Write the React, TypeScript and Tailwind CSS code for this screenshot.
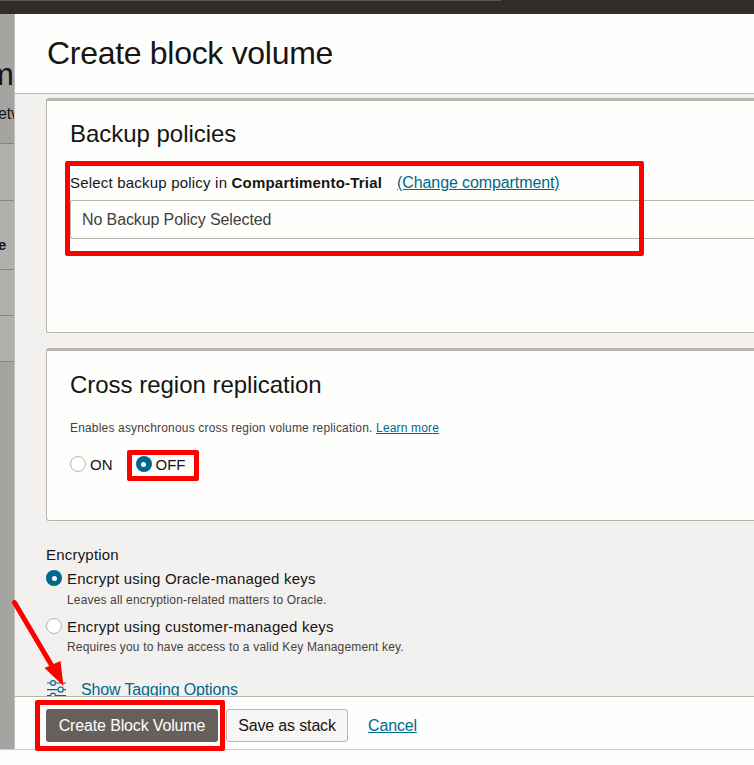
import type { ReactNode } from "react";

function Radio({ checked = false }: { checked?: boolean }) {
  return checked ? (
    <span className="flex h-4 w-4 shrink-0 items-center justify-center rounded-full bg-[#00688c]">
      <span className="h-[5px] w-[5px] rounded-full bg-white" />
    </span>
  ) : (
    <span className="h-4 w-4 shrink-0 rounded-full border border-[#bbb5b0] bg-[#fefefd]" />
  );
}

function Card({ title, className, children }: { title: ReactNode; className: string; children: ReactNode }) {
  return (
    <section
      className={`shrink-0 rounded-l-[3px] border-y border-l border-t-[3px] border-[#bbb4ad] bg-[#fefefd] pl-[23px] ${className}`}
    >
      {title}
      {children}
    </section>
  );
}

function Backdrop() {
  return (
    <aside className="flex w-[14px] shrink-0 flex-col overflow-hidden whitespace-nowrap bg-[#a5a4a2]">
      <div className="h-[129px] shrink-0">
        <div className="flex h-[78px] justify-end pt-[42px] text-[32px] leading-9">m</div>
        <div className="-ml-[2px] pt-[12px] text-[16px] leading-5 tracking-[-0.1px]">etw</div>
      </div>
      <div className="h-[57px] shrink-0 border-t border-[#858482] bg-[#b1b0ae]" />
      <div className="flex h-[69px] shrink-0 items-center border-t border-[#858482] bg-[#b1b0ae] pt-5 text-[15px] font-bold">
        <span className="-ml-[2px]">e</span>
      </div>
      <div className="h-[46px] shrink-0 border-t border-[#858482] bg-[#b1b0ae]" />
      <div className="h-[46px] shrink-0 border-t border-[#858482] bg-[#b1b0ae]" />
      <div className="flex-1 border-t border-[#858482]" />
    </aside>
  );
}

export default function App() {
  return (
    <div className="relative flex h-[765px] w-[754px] flex-col overflow-hidden bg-[#fcfcfc] font-['Liberation_Sans',Arial,sans-serif] text-[#161513]">
      <header className="h-[14px] shrink-0 bg-[#312d2a]">
        <div className="h-px w-[501px] bg-[#5b574e]" />
      </header>

      <div className="flex h-[735px] shrink-0">
        <Backdrop />
        <main className="flex min-w-0 flex-1 flex-col overflow-hidden whitespace-nowrap border-l border-[#c4bfb9] bg-[#fefefd]">
          <h1 className="h-20 shrink-0 border-b border-[#bbb5b0] pt-[21px] pl-8 text-[32px] leading-9 tracking-[-0.3px]">
            Create block volume
          </h1>

          <div className="flex h-[602px] shrink-0 flex-col overflow-hidden bg-[#f3f1f0] pt-1 pl-[31px]">
            <Card
              className="h-[235px]"
              title={<h2 className="h-[68px] pt-[19px] text-2xl leading-7 tracking-[-0.03px]">Backup policies</h2>}
            >
              <div className="flex h-[31px] items-center pb-[3px] text-[15px]">
                <span className="tracking-[0.2px]">
                  Select backup policy in <b>Compartimento-Trial</b>
                </span>
                <a className="ml-[15px] text-[16px] tracking-[-0.1px] text-[#00688c] underline">
                  (Change compartment)
                </a>
              </div>
              <div className="flex h-[39px] items-center rounded-l-[3px] border-y border-l border-[#bbb4ad] pl-[11px] text-[16px] tracking-[-0.11px] text-[#44403c]">
                No Backup Policy Selected
              </div>
            </Card>

            <Card
              className="mt-[15px] h-[173px]"
              title={
                <h2 className="h-[68px] pt-5 text-2xl leading-7 tracking-[-0.02px]">Cross region replication</h2>
              }
            >
              <p className="h-[18px] text-[12px] leading-[18px] tracking-[0.17px] text-[#44403c]">
                Enables asynchronous cross region volume replication.{" "}
                <a className="text-[#00688c] underline">Learn more</a>
              </p>
              <div className="mt-[19px] flex h-4 items-center text-[15px]">
                <Radio />
                <span className="ml-[4px] pt-[2px]">ON</span>
                <span className="ml-[23px] flex items-center gap-[4px]">
                  <Radio checked />
                  <span className="pt-[2px]">OFF</span>
                </span>
              </div>
            </Card>

            <div className="mt-6 h-5 shrink-0 text-[15px] leading-5 tracking-[0.2px]">Encryption</div>
            <div className="mt-[5px] flex h-4 shrink-0 items-center gap-[5px] text-[15px] tracking-[0.21px]">
              <Radio checked />
              <span className="pt-[2px]">Encrypt using Oracle-managed keys</span>
            </div>
            <p className="mt-[6px] h-4 shrink-0 pl-[21px] text-[12px] leading-4 tracking-[0.155px] text-[#44403c]">
              Leaves all encryption-related matters to Oracle.
            </p>
            <div className="mt-[10px] flex h-4 shrink-0 items-center gap-[5px] text-[15px] tracking-[0.21px]">
              <Radio />
              <span className="pt-[2px]">Encrypt using customer-managed keys</span>
            </div>
            <p className="mt-[5px] h-4 shrink-0 pl-[21px] text-[12px] leading-4 tracking-[0.165px] text-[#44403c]">
              Requires you to have access to a valid Key Management key.
            </p>
            <div className="mt-[24px] flex h-5 shrink-0 items-start gap-[15px] text-[16px] leading-5 text-[#00688c]">
              <svg width="20" height="20" viewBox="0 0 20 20" fill="none" stroke="currentColor" strokeWidth="1.2">
                <path d="M1 4h3.5M9.5 4H20M1 10.6h10.5M17.5 10.6H20M1 16.5h3.5M9.5 16.5H20" />
                <circle cx="7" cy="4" r="2.4" />
                <circle cx="14.7" cy="10.6" r="2.6" />
                <circle cx="7" cy="16.5" r="2.4" />
              </svg>
              <span className="pt-px tracking-[-0.15px]">Show Tagging Options</span>
            </div>
          </div>

          <footer className="flex flex-1 items-start border-t border-[#bbb4ad] pt-3 pl-[31px] text-[16px] tracking-[-0.15px]">
            <button className="h-[33px] w-[172px] rounded-[3px] bg-[#665f5b] text-white">Create Block Volume</button>
            <button className="ml-2 h-[33px] w-[122px] rounded-[3px] border border-[#bbb5b0] bg-[#f7f6f5]">
              Save as stack
            </button>
            <a className="ml-5 leading-[33px] text-[#00688c] underline">Cancel</a>
          </footer>
        </main>
      </div>
      <div className="flex-1 border-t border-[#cccac8]" />

      {/* Callouts drawn over the dialog */}
      <div className="absolute top-[161px] left-[65px] h-[95px] w-[579px] rounded-[2px] border-5 border-[#fe0000]" />
      <div className="absolute top-[450px] left-[127px] h-[31px] w-[72px] rounded-[2px] border-5 border-[#fe0000]" />
      <div className="absolute top-[700px] left-[35px] h-[51px] w-[190px] rounded-[2px] border-5 border-[#fe0000]" />
      <svg className="absolute top-[595px] left-[5px]" width="65" height="95" viewBox="5 595 65 95">
        <path d="M14.5 602.5 52 666" stroke="#fe0000" strokeWidth="5" strokeLinecap="round" />
        <path d="M63.5 686 44.5 668 60.5 661Z" fill="#fe0000" />
      </svg>
    </div>
  );
}
